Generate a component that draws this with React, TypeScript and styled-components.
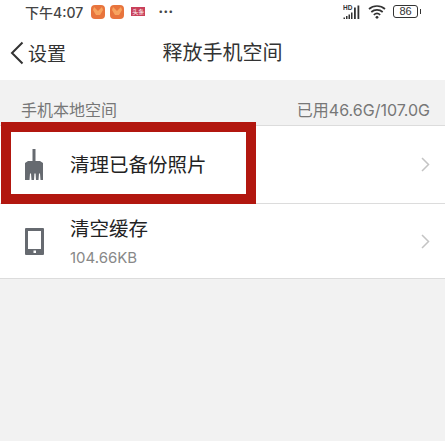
import React from "react";
import styled, { createGlobalStyle } from "styled-components";

const GlobalStyle = createGlobalStyle`
  html, body {
    margin: 0;
    padding: 0;
    background: #f2f2f2;
  }
  body {
    font-family: "Inter", "Noto Sans CJK SC", sans-serif;
  }
`;

const BroomIcon = () => (
  <svg width="18" height="31" viewBox="0 0 18 31">
    <path
      d="M7.500 0h3v12H15l3 2v17h-2.500l-.5-6.500-1 0-.5 6.500h-2.500l-.4-6.500h-1.200l-.4 6.500H6.500L6 24.500H5L4.500 31H0V14l3-2h4.500z"
      fill="#666a70"
    />
  </svg>
);

const PhoneIcon = () => (
  <svg width="19" height="27" viewBox="0 0 19 27">
    <path
      fillRule="evenodd"
      d="M1 0h17a1 1 0 0 1 1 1v25a1 1 0 0 1-1 1H1a1 1 0 0 1-1-1V1a1 1 0 0 1 1-1zM3 3v18h13V3z"
      fill="#666a70"
    />
    <rect x="8.500" y="22.500" width="2.500" height="2.500" fill="#fff" />
  </svg>
);

const Chevron = () => (
  <ChevronSvg width="9" height="15" viewBox="0 0 9 15">
    <path d="M1 1l6.500 6.500L1 14" fill="none" stroke="#c4c4c4" strokeWidth="1.500" />
  </ChevronSvg>
);

const AppIcon = () => (
  <AppBadge>
    <svg width="14" height="14" viewBox="0 0 14 14">
      <path d="M3 2l4 4 4-4 1 3-3 5H5L2 5z" fill="#f7a35e" />
    </svg>
  </AppBadge>
);

export default function App() {
  return (
    <Page>
      <GlobalStyle />
      <TopArea>
        <StatusBar>
          <StatusLeft>
            <Clock>下午4:07</Clock>
            <AppIcon />
            <AppIcon />
            <NewsBadge>头条</NewsBadge>
            <Dots>···</Dots>
          </StatusLeft>
          <StatusRight>
            <svg width="18" height="16" viewBox="0 0 18 16">
              <text x="0" y="6" fontSize="6.500" fontWeight="700" fontFamily="Liberation Sans" fill="#333">HD</text>
              <path d="M0.500 13.500h1.500v1.500H.5zM3 12h1.500v3H3zM5.500 10.500H7V15H5.500zM8 8.500h1.500V15H8zM11 3.500h1.800V15H11zM14.500 1.500h1.800V15h-1.800z" fill="#333" />
            </svg>
            <svg width="18" height="15" viewBox="0 0 18 15">
              <path d="M1 5c4.500-4 11.500-4 16 0M3.300 8c3.200-2.800 8.200-2.800 11.400 0M5.800 10.800c1.800-1.500 4.600-1.500 6.400 0" fill="none" stroke="#333" strokeWidth="1.700" />
              <circle cx="9" cy="13.300" r="1.400" fill="#333" />
            </svg>
            <Battery>
              <BatteryBody>86</BatteryBody>
              <BatteryTip />
            </Battery>
          </StatusRight>
        </StatusBar>
        <NavBar>
          <BackLink>
            <svg width="14" height="24" viewBox="0 0 14 24">
              <path d="M12.500 1.500L2 12l10.500 10.500" fill="none" stroke="#333" strokeWidth="2" />
            </svg>
            <BackText>设置</BackText>
          </BackLink>
          <NavTitle>释放手机空间</NavTitle>
        </NavBar>
      </TopArea>
      <SectionHeader>
        <SectionLabel>手机本地空间</SectionLabel>
        <SectionLabel>已用46.6G/107.0G</SectionLabel>
      </SectionHeader>
      <List>
        <Row $height={78}>
          <IconSlot>
            <BroomIcon />
          </IconSlot>
          <RowText>
            <RowTitle>清理已备份照片</RowTitle>
          </RowText>
          <Chevron />
          <Highlight />
        </Row>
        <Row $height={75}>
          <IconSlot>
            <PhoneIcon />
          </IconSlot>
          <RowText $offset={2}>
            <RowTitle>清空缓存</RowTitle>
            <RowSub>104.66KB</RowSub>
          </RowText>
          <Chevron />
        </Row>
      </List>
    </Page>
  );
}

const Page = styled.div`
  width: 445px;
  height: 441px;
  overflow: hidden;
  background: #f2f2f2;
`;

const TopArea = styled.header`
  background: #fff;
  height: 80px;
  display: flex;
  flex-direction: column;
`;

const StatusBar = styled.div`
  height: 23px;
  display: flex;
  justify-content: space-between;
  align-items: center;
  padding: 0 24px 0 25px;
`;

const StatusLeft = styled.div`
  display: flex;
  align-items: center;
`;

const Clock = styled.span`
  font-size: 14px;
  font-weight: 500;
  color: #444;
  margin-right: 8px;
`;

const AppBadge = styled.span`
  width: 14px;
  height: 14px;
  border-radius: 4px;
  background: #e8743c;
  margin-right: 5px;
  display: flex;
`;

const NewsBadge = styled.span`
  width: 14px;
  height: 9px;
  margin-left: 2px;
  background: #c9405a;
  color: #fff;
  font-size: 6px;
  line-height: 9px;
  text-align: center;
  margin-right: 13px;
  overflow: hidden;
`;

const Dots = styled.span`
  font-size: 15px;
  font-weight: 700;
  color: #444;
`;

const StatusRight = styled.div`
  display: flex;
  align-items: center;
  gap: 7px;
`;

const Battery = styled.div`
  display: flex;
  align-items: center;
  gap: 1.500px;
`;

const BatteryBody = styled.div`
  width: 23px;
  height: 11px;
  border: 1px solid #333;
  border-radius: 3px;
  font-family: "Liberation Sans", sans-serif;
  font-size: 11px;
  line-height: 11px;
  text-align: center;
  color: #333;
`;

const BatteryTip = styled.div`
  width: 1.500px;
  height: 5px;
  background: #333;
`;

const NavBar = styled.nav`
  flex: 1;
  position: relative;
  display: flex;
  align-items: center;
  justify-content: center;
`;

const BackLink = styled.div`
  position: absolute;
  left: 10px;
  top: 16px;
  display: flex;
  align-items: center;
  gap: 4px;
`;

const BackText = styled.span`
  font-size: 19px;
  color: #333;
`;

const NavTitle = styled.h1`
  margin: 0;
  font-size: 20px;
  font-weight: 400;
  color: #333;
`;

const SectionHeader = styled.div`
  height: 46px;
  box-sizing: border-box;
  display: flex;
  justify-content: space-between;
  align-items: center;
  padding: 12px 15px 0 21px;
  border-bottom: 1px solid #dcdcdc;
`;

const SectionLabel = styled.span`
  font-size: 16px;
  color: #777;
`;

const List = styled.div`
  background: #fff;
`;

const Row = styled.div<{ $height: number }>`
  position: relative;
  box-sizing: border-box;
  height: ${(p) => p.$height}px;
  display: flex;
  align-items: center;
  padding: 0 15px 0 25px;
  border-bottom: 1px solid #dcdcdc;
`;

const IconSlot = styled.div`
  width: 45px;
  display: flex;
  align-items: center;
`;

const RowText = styled.div<{ $offset?: number }>`
  flex: 1;
  display: flex;
  flex-direction: column;
  gap: 8px;
  padding-top: ${(p) => p.$offset ?? 0}px;
`;

const RowTitle = styled.span`
  font-size: 19.500px;
  line-height: 24px;
  color: #222;
`;

const RowSub = styled.span`
  font-size: 15px;
  line-height: 18px;
  color: #888;
`;

const ChevronSvg = styled.svg`
  flex: none;
`;

const Highlight = styled.div`
  position: absolute;
  left: 1px;
  top: -4px;
  width: 255px;
  height: 82px;
  box-sizing: border-box;
  border: 10px solid #b2170f;
  pointer-events: none;
`;
